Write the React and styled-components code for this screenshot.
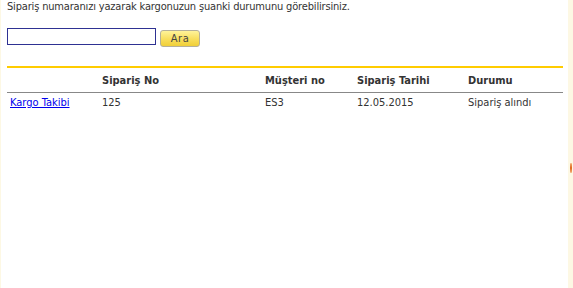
import React from "react";
import styled, { createGlobalStyle } from "styled-components";

const Global = createGlobalStyle`
  html, body { margin: 0; padding: 0; background: #fff; }
  body { font-family: "DejaVu Sans Condensed", "DejaVu Sans", sans-serif; font-size: 11px; color: #333; }
`;

const Page = styled.div`
  display: flex;
  min-height: 100vh;
`;

const Edge = styled.div`
  width: ${(p) => p.$w}px;
  background: #fdf8e4;
  flex: none;
  position: relative;
`;

const Mark = styled.span`
  position: absolute;
  left: 2px;
  top: 163px;
  width: 2px;
  height: 10px;
  border-radius: 1px;
  background: linear-gradient(#f3b27a, #e0691f, #f3b27a);
`;

const Main = styled.main`
  flex: 1;
  padding: 0 5px 0 6px;
`;

const Intro = styled.p`
  margin: 0;
  line-height: 14px;
  height: 14px;
  letter-spacing: -0.17px;
`;

const Form = styled.form`
  display: flex;
  align-items: flex-start;
  gap: 3px;
  margin-top: 14px;
  height: 19px;
`;

const Input = styled.input`
  box-sizing: border-box;
  width: 149px;
  height: 17px;
  border: 1px solid #2e3192;
  margin: 0;
  padding: 0 2px;
  font: inherit;
`;

const Button = styled.button`
  box-sizing: border-box;
  margin: 2px 0 0 1px;
  width: 40px;
  height: 17px;
  padding: 0;
  border: 1px solid #b5b09a;
  border-radius: 3px;
  background: linear-gradient(#fff39a, #f8de5c 55%, #f0cf38);
  font-family: inherit;
  font-size: 11px;
  letter-spacing: 0.5px;
  color: #444;
  line-height: 15px;
`;

const Rule = styled.div`
  margin-top: 19px;
  height: 2px;
  background: #ffcc00;
`;

const Table = styled.table`
  width: 100%;
  border-collapse: collapse;
`;

const HeadCell = styled.th`
  text-align: left;
  font-weight: bold;
  padding: 6px 3px 4px;
  line-height: 14px;
  width: ${(p) => p.$w}px;
  border-bottom: 1px solid #888;
`;

const Cell = styled.td`
  padding: 3px 3px;
  line-height: 14px;
`;

const Link = styled.a`
  color: #0000ee;
  text-decoration: underline;
`;

export default function App() {
  const cols = [
    { label: "", w: 86 },
    { label: "Sipariş No", w: 157 },
    { label: "Müşteri no", w: 86 },
    { label: "Sipariş Tarihi", w: 105 },
    { label: "Durumu" },
  ];
  return (
    <>
      <Global />
      <Page>
        <Edge $w={1} />
        <Main>
          <Intro>Sipariş numaranızı yazarak kargonuzun şuanki durumunu görebilirsiniz.</Intro>
          <Form onSubmit={(e) => e.preventDefault()}>
            <Input type="text" />
            <Button type="submit">Ara</Button>
          </Form>
          <Rule />
          <Table>
            <thead>
              <tr>
                {cols.map((c, i) => (
                  <HeadCell key={i} $w={c.w}>{c.label}</HeadCell>
                ))}
              </tr>
            </thead>
            <tbody>
              <tr>
                <Cell><Link href="#">Kargo Takibi</Link></Cell>
                <Cell>125</Cell>
                <Cell>ES3</Cell>
                <Cell>12.05.2015</Cell>
                <Cell>Sipariş alındı</Cell>
              </tr>
            </tbody>
          </Table>
        </Main>
        <Edge $w={5}>
          <Mark />
        </Edge>
      </Page>
    </>
  );
}
